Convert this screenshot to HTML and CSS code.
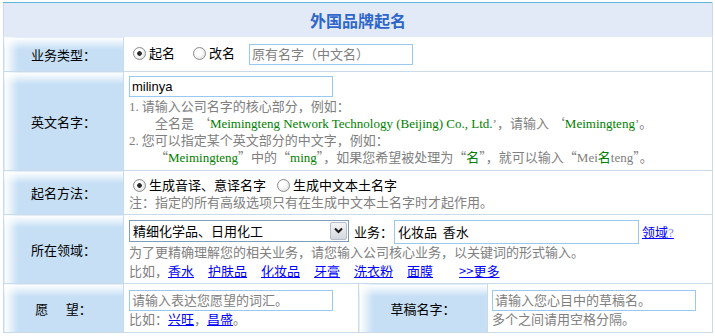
FILE: index.html
```html
<!DOCTYPE html>
<html lang="zh-CN">
<head>
    <meta charset="UTF-8">
    <title>外国品牌起名</title>
    <link rel="stylesheet" href="styles.css">
</head>
<body>

    <table class="name-form">
        <colgroup>
            <col class="col-label">
            <col class="col-value">
            <col class="col-label2">
            <col class="col-value2">
        </colgroup>

        <tr class="row-title">
            <td colspan="4" class="title">外国品牌起名</td>
        </tr>

        <!-- 业务类型 -->
        <tr class="row-type">
            <td class="label">业务类型：</td>
            <td colspan="3" class="value">
                <label class="opt"><input type="radio" name="type" checked>起名</label>
                <label class="opt"><input type="radio" name="type">改名</label>
                <input type="text" class="txt old-name" placeholder="原有名字（中文名）">
            </td>
        </tr>

        <!-- 英文名字 -->
        <tr class="row-english">
            <td class="label">英文名字：</td>
            <td colspan="3" class="value">
                <input type="text" class="txt en-name" value="milinya">
                <div class="hint">
                    <div><span class="en">1.</span> 请输入公司名字的核心部分，例如：</div>
                    <div class="indent">全名是 ‘<span class="en"><span class="green">Meimingteng Network Technology (Beijing) Co., Ltd.</span>’</span>，请输入 ‘<span class="en"><span class="green">Meimingteng</span>’</span>。</div>
                    <div><span class="en">2.</span> 您可以指定某个英文部分的中文字，例如：</div>
                    <div class="indent">“<span class="en green">Meimingteng</span>”中的“<span class="en green">ming</span>”，如果您希望被处理为“<span class="green">名</span>”，就可以输入“<span class="en">Mei</span><span class="green">名</span><span class="en">teng</span>”。</div>
                </div>
            </td>
        </tr>

        <!-- 起名方法 -->
        <tr class="row-method">
            <td class="label">起名方法：</td>
            <td colspan="3" class="value">
                <div>
                    <label class="opt opt-tight"><input type="radio" name="method" checked>生成音译、意译名字</label>
                    <label class="opt"><input type="radio" name="method">生成中文本土名字</label>
                </div>
                <div class="hint">注：指定的所有高级选项只有在生成中文本土名字时才起作用。</div>
            </td>
        </tr>

        <!-- 所在领域 -->
        <tr class="row-field">
            <td class="label">所在领域：</td>
            <td colspan="3" class="value">
                <div class="field-line">
                    <div class="select-box">
                        <select>
                            <option>精细化学品、日用化工</option>
                        </select>
                        <span class="select-btn">
                            <svg width="9" height="7" viewBox="0 0 9 7"><path d="M1 1.5 L4.5 5 L8 1.5" fill="none" stroke="#1a1a1a" stroke-width="2"/></svg>
                        </span>
                    </div>
                    <span class="biz-label">业务：</span>
                    <input type="text" class="txt biz" value="化妆品  香水">
                    <a href="#" class="field-link">领域<span class="q">?</span></a>
                </div>
                <div class="hint">为了更精确理解您的相关业务，请您输入公司核心业务，以关键词的形式输入。</div>
                <div class="hint examples">比如，<a href="#">香水</a><a href="#">护肤品</a><a href="#">化妆品</a><a href="#">牙膏</a><a href="#">洗衣粉</a><a href="#">面膜</a><a href="#" class="more">&gt;&gt;更多</a></div>
            </td>
        </tr>

        <!-- 愿望 / 草稿名字 -->
        <tr class="row-wish">
            <td class="label">愿&nbsp;&nbsp;&nbsp;&nbsp;&nbsp;&nbsp;望：</td>
            <td class="value">
                <input type="text" class="txt wish" placeholder="请输入表达您愿望的词汇。">
                <div class="hint">比如：<a href="#" class="plain">兴旺</a>，<a href="#" class="plain">昌盛</a>。</div>
            </td>
            <td class="label">草稿名字：</td>
            <td class="value value-draft">
                <input type="text" class="txt draft" placeholder="请输入您心目中的草稿名。">
                <div class="hint">多个之间请用空格分隔。</div>
            </td>
        </tr>
    </table>

</body>
</html>
```

FILE: styles.css
```css
body {
    margin: 0;
    font-family: "Noto Sans CJK SC", sans-serif;
    font-size: 13px;
    color: #000;
    background-color: white;
}

.name-form {
    border-collapse: collapse;
    table-layout: fixed;
    width: 709px;
    margin: 2px 0 0 3px;
}

.col-label { width: 120px; }
.col-value { width: 235px; }
.col-label2 { width: 129px; }
.col-value2 { width: 225px; }

.name-form td {
    border: 1px solid #c9dbea;
    padding: 0 5px;
    vertical-align: middle;
}

.name-form td.title {
    border-top-color: #5fb6d8;
    border-bottom-color: #e3eaf7;
    background-color: #e3eaf7;
    text-align: center;
    font-size: 16px;
    font-weight: bold;
    color: #2e66c9;
    padding: 0;
}

.row-title { height: 34px; }
.row-type { height: 35px; }
.row-english { height: 99px; }
.row-method { height: 44px; }
.row-field { height: 69px; }
.row-wish { height: 49px; }

.name-form td.label {
    padding: 0;
    text-align: center;
    background:
        linear-gradient(to right, #fff 0, rgba(255, 255, 255, 0) 14px),
        linear-gradient(to bottom, #fff 0, #c6dff5 12px, #c6dff5 100%);
}

.value-draft {
    padding-left: 4px !important;
}

.hint {
    color: #808080;
    line-height: 16px;
}

.en {
    font-family: "Liberation Serif", serif;
}

.green {
    color: #008000;
}

.indent {
    padding-left: 26px;
}

/* radio buttons */
.opt {
    margin-right: 11px;
}

.opt-tight {
    margin-right: 4px;
}

.opt input {
    appearance: none;
    width: 13px;
    height: 13px;
    margin: 0 3px 0 4px;
    border: 1px solid #8d8d8d;
    border-radius: 50%;
    background: radial-gradient(circle at 40% 40%, #fff 0, #fff 30%, #d4d4d4 100%);
    vertical-align: -2px;
}

.opt input:checked {
    background:
        radial-gradient(circle, #2b2b2b 0, #2b2b2b 2px, rgba(0, 0, 0, 0) 2.6px),
        radial-gradient(circle at 40% 40%, #fff 0, #fff 30%, #d4d4d4 100%);
}

/* text boxes */
.txt {
    box-sizing: border-box;
    border: 1px solid #99c8f0;
    font-family: "Liberation Sans", "Noto Sans CJK SC", sans-serif;
    font-size: 13px;
    padding: 0 2px;
    color: #000;
    margin: 0;
    vertical-align: middle;
}

.txt::placeholder {
    color: #808080;
    font-family: "Noto Sans CJK SC", sans-serif;
}

.old-name {
    width: 164px;
    height: 21px;
}

.en-name {
    display: block;
    width: 204px;
    height: 21px;
    margin-bottom: 1px;
}

.wish, .draft {
    display: block;
    width: 204px;
    height: 21px;
}

/* 所在领域 */
.field-line {
    display: flex;
    align-items: flex-start;
    height: 24px;
}

.select-box {
    box-sizing: border-box;
    display: flex;
    width: 220px;
    height: 22px;
    border: 1px solid #7f9db9;
    background-color: white;
}

.select-box select {
    appearance: none;
    flex: 1;
    border: none;
    outline: none;
    background-color: white;
    font-family: "Noto Sans CJK SC", sans-serif;
    font-size: 13px;
    padding: 0 0 0 3px;
    color: #000;
}

.select-btn {
    box-sizing: border-box;
    display: flex;
    align-items: center;
    justify-content: center;
    width: 17px;
    height: 18px;
    margin: 1px;
    border: 1px solid #b5bfcc;
    border-radius: 2px;
    background: linear-gradient(to bottom, #f4f4f4, #d4d8de);
}

.biz-label {
    margin-left: 5px;
    line-height: 24px;
}

.biz {
    width: 245px;
    height: 24px;
    margin-left: 1px;
    font-family: "Noto Sans CJK SC", sans-serif;
    vertical-align: top;
    padding: 0 3px;
}

.field-link {
    margin-left: 3px;
    line-height: 24px;
}

.field-link .q {
    color: #8a80ff;
    font-family: "Liberation Serif", serif;
}

a {
    color: #0000ff;
    text-decoration: underline;
}

.examples {
    margin-top: 3px;
}

.hint a {
    display: inline-block;
    line-height: 16px;
    vertical-align: top;
    margin-right: 14px;
}

.hint a.more {
    margin-left: 12px;
    margin-right: 0;
}

.hint a.plain {
    margin-right: 0;
}
```
